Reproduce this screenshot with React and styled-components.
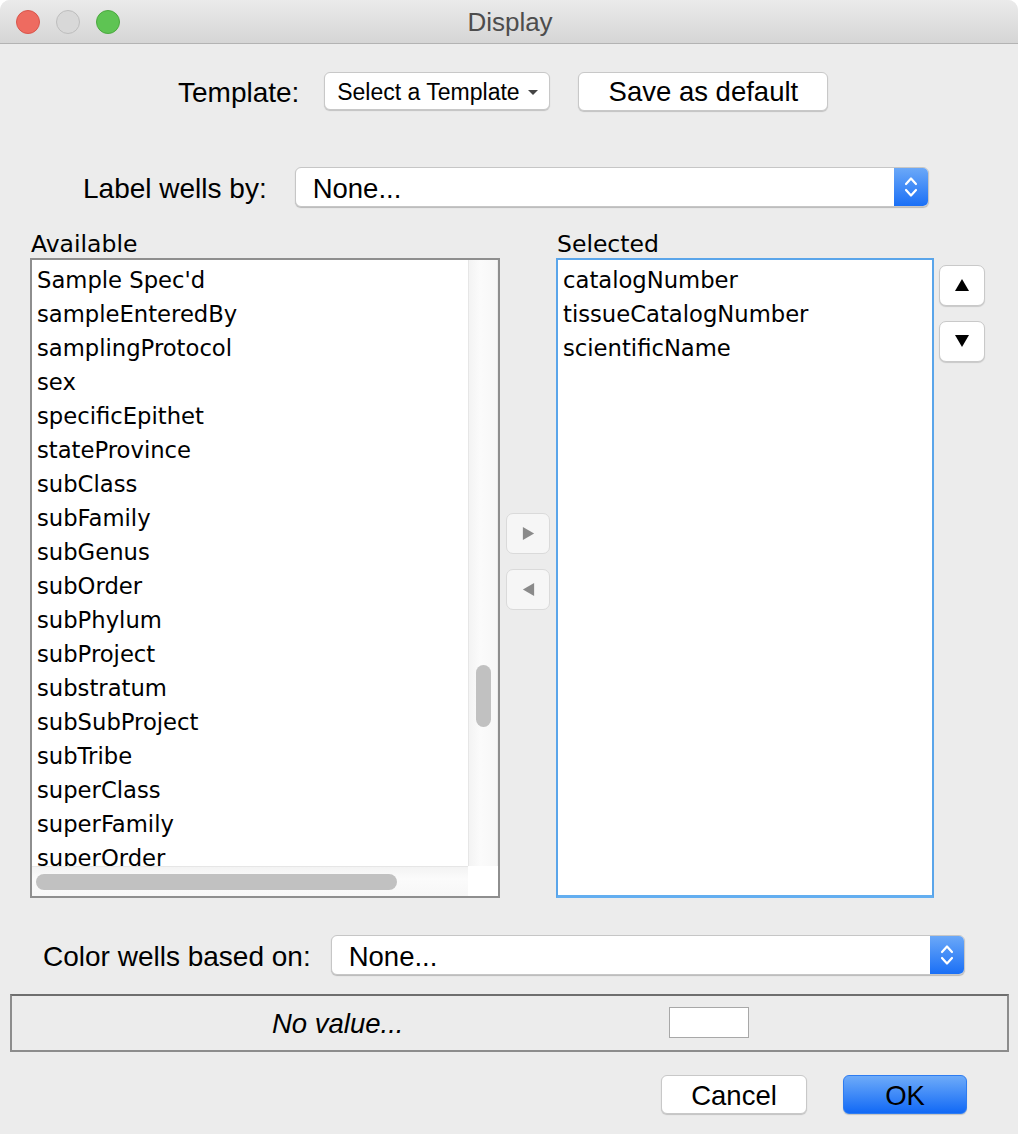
import React from "react";
import styled, { createGlobalStyle } from "styled-components";

const Global = createGlobalStyle`
  html, body { margin: 0; padding: 0; background: #ffffff; }
  body { font-family: "Liberation Sans", Arial, sans-serif; }
  * { box-sizing: border-box; }
`;

const Window = styled.div`
  width: 1018px;
  height: 1134px;
  background: #ececec;
  border-radius: 10px 10px 0 0;
  overflow: hidden;
  display: flex;
  flex-direction: column;
  color: #000;
`;

const TitleBar = styled.div`
  height: 44px;
  flex: none;
  background: linear-gradient(#ebebeb, #d5d5d5);
  border-bottom: 1px solid #b3b3b3;
  display: flex;
  align-items: center;
  position: relative;
`;

const Lights = styled.div`
  display: flex;
  gap: 16px;
  padding-left: 16px;
`;

const Light = styled.span`
  width: 24px;
  height: 24px;
  border-radius: 50%;
  background: ${(p) => p.$bg};
  border: 1px solid ${(p) => p.$bd};
`;

const Title = styled.div`
  position: absolute;
  left: 0;
  right: 0;
  top: 0;
  bottom: 0;
  display: flex;
  align-items: center;
  justify-content: center;
  font-size: 26px;
  color: #4d4d4d;
  padding: 2px 0 0 2px;
  pointer-events: none;
`;

const Row = styled.div`
  display: flex;
  align-items: center;
  padding-left: ${(p) => p.$pl || 0}px;
  margin-top: ${(p) => p.$mt || 0}px;
  height: ${(p) => p.$h || 40}px;
  flex: none;
`;

const Label = styled.span`
  font-size: 28px;
  padding-top: 4px;
  margin-right: ${(p) => p.$mr || 0}px;
  white-space: nowrap;
`;

const PushButton = styled.button`
  font-family: "Liberation Sans", Arial, sans-serif;
  font-size: ${(p) => p.$fs || 27.5}px;
  width: ${(p) => p.$w}px;
  height: ${(p) => p.$h || 39}px;
  background: #ffffff;
  border: 1px solid #c8c8c8;
  border-radius: 6px;
  box-shadow: 0 1px 1px rgba(0, 0, 0, 0.18);
  color: #000;
  padding: 2px 0 0 0;
  display: flex;
  align-items: center;
  justify-content: center;
  gap: 8px;
  margin-left: ${(p) => p.$ml || 0}px;
`;

const DefaultButton = styled(PushButton)`
  background: linear-gradient(#6eabf9, #1169f6);
  border: 1px solid #2e7cf1;
`;

const Caret = styled.span`
  width: 0;
  height: 0;
  border-left: 5px solid transparent;
  border-right: 5px solid transparent;
  border-top: 5px solid #444;
  margin-top: 0;
`;

const Combo = styled.div`
  width: 634px;
  height: 40px;
  background: #fff;
  border: 1px solid #c6c6c6;
  border-radius: 6px;
  box-shadow: 0 1px 1px rgba(0, 0, 0, 0.22);
  display: flex;
  align-items: stretch;
  overflow: hidden;
`;

const ComboText = styled.div`
  flex: 1;
  display: flex;
  align-items: center;
  padding: 4px 0 0 17px;
  font-size: 27.5px;
`;

const Stepper = styled.div`
  width: 34px;
  background: linear-gradient(#6ba8f8, #1a6ff6);
  display: flex;
  align-items: center;
  justify-content: center;
`;

const ListsArea = styled.div`
  display: flex;
  padding-left: 30px;
  margin-top: 23px;
  flex: none;
`;

const Column = styled.div`
  display: flex;
  flex-direction: column;
  width: ${(p) => p.$w}px;
`;

const ListHeader = styled.div`
  font-family: "DejaVu Sans", Verdana, sans-serif;
  font-size: 23.5px;
  height: 28px;
  line-height: 28px;
  padding-left: 1px;
`;

const ListBox = styled.div`
  height: 640px;
  background: #fff;
  border: 2px solid ${(p) => (p.$focus ? "#5aa5ea" : "#8e8e8e")};
  ${(p) => p.$focus && "border-bottom-width: 3px; border-bottom-color: #63aef0;"}
  display: grid;
  grid-template-columns: ${(p) => (p.$scroll ? "1fr 30px" : "1fr")};
  grid-template-rows: ${(p) => (p.$scroll ? "1fr 30px" : "1fr")};
  overflow: hidden;
`;

const Viewport = styled.div`
  overflow: hidden;
  padding-top: 3px;
`;

const Item = styled.div`
  font-family: "DejaVu Sans", Verdana, sans-serif;
  font-size: 22.7px;
  height: 34px;
  line-height: 34px;
  padding-left: 5px;
  white-space: nowrap;
`;

const VTrack = styled.div`
  background: linear-gradient(90deg, #f3f3f3, #fbfbfb 40%, #f7f7f7);
  border-left: 1px solid #e6e6e6;
  border-right: 1px solid #ececec;
  padding-top: 405px;
  display: flex;
  justify-content: center;
`;

const VThumb = styled.div`
  width: 15px;
  height: 62px;
  border-radius: 8px;
  background: #c1c1c1;
`;

const HTrack = styled.div`
  background: linear-gradient(#f3f3f3, #fbfbfb 40%, #f7f7f7);
  border-top: 1px solid #e6e6e6;
  padding: 7px 0 0 4px;
`;

const HThumb = styled.div`
  width: 361px;
  height: 16px;
  border-radius: 8px;
  background: #c1c1c1;
`;

const Corner = styled.div`
  background: #fff;
`;

const MoveColumn = styled.div`
  width: 56px;
  padding: 283px 6px 0 6px;
  display: flex;
  flex-direction: column;
  gap: 15px;
`;

const OrderColumn = styled.div`
  padding: 35px 0 0 5px;
  display: flex;
  flex-direction: column;
  gap: 15px;
`;

const ArrowButton = styled.button`
  width: ${(p) => p.$w}px;
  height: 41px;
  padding: 0;
  border-radius: 7px;
  background: ${(p) => (p.$disabled ? "#f6f6f6" : "#fff")};
  border: 1px solid ${(p) => (p.$disabled ? "#dadada" : "#c9c9c9")};
  box-shadow: ${(p) => (p.$disabled ? "none" : "0 1px 1px rgba(0,0,0,0.15)")};
  display: flex;
  align-items: center;
  justify-content: center;
`;

const Panel = styled.div`
  margin: 19px 9px 0 10px;
  height: 58px;
  border: 2px solid #8c8c8c;
  border-top-color: #6e6e6e;
  display: flex;
  align-items: center;
  padding-left: 260px;
  flex: none;
`;

const Italic = styled.span`
  font-size: 27.5px;
  font-style: italic;
  padding-top: 2px;
  width: 397px;
`;

const Swatch = styled.div`
  width: 80px;
  height: 31px;
  background: #fff;
  border: 1px solid #a8a8a8;
  margin-top: -1px;
`;

const Footer = styled.div`
  display: flex;
  justify-content: flex-end;
  padding-right: 51px;
  margin-top: 23px;
  gap: 36px;
`;

const available = [
  "Sample Spec'd",
  "sampleEnteredBy",
  "samplingProtocol",
  "sex",
  "specificEpithet",
  "stateProvince",
  "subClass",
  "subFamily",
  "subGenus",
  "subOrder",
  "subPhylum",
  "subProject",
  "substratum",
  "subSubProject",
  "subTribe",
  "superClass",
  "superFamily",
  "superOrder",
];

const selected = ["catalogNumber", "tissueCatalogNumber", "scientificName"];

const Tri = ({ dir, color, size = 14 }) => {
  const pts = {
    up: "1,13 8,1 15,13",
    down: "1,1 15,1 8,13",
    right: "2,1 14,8 2,15",
    left: "14,1 2,8 14,15",
  }[dir];
  return (
    <svg width={size} height={size} viewBox="0 0 16 16">
      <polygon points={pts} fill={color} />
    </svg>
  );
};

const Chevrons = () => (
  <svg width="16" height="26" viewBox="0 0 16 26">
    <path d="M3 10 L8 4.5 L13 10" stroke="#fff" strokeWidth="2.2" fill="none" strokeLinecap="round" strokeLinejoin="round" />
    <path d="M3 16 L8 21.5 L13 16" stroke="#fff" strokeWidth="2.2" fill="none" strokeLinecap="round" strokeLinejoin="round" />
  </svg>
);

export default function App() {
  return (
    <>
      <Global />
      <Window>
        <TitleBar>
          <Lights>
            <Light $bg="#ee6b60" $bd="#d8554b" />
            <Light $bg="#d8d8d8" $bd="#bdbdbd" />
            <Light $bg="#5ec453" $bd="#4ba83f" />
          </Lights>
          <Title>Display</Title>
        </TitleBar>

        <Row $pl={178} $mt={27} $h={40}>
          <Label $mr={25}>Template:</Label>
          <PushButton $w={226} $h={38} $fs={23}>
            Select a Template <Caret />
          </PushButton>
          <PushButton $w={250} $h={39} $ml={28}>
            Save as default
          </PushButton>
        </Row>

        <Row $pl={83} $mt={56} $h={40}>
          <Label $mr={28}>Label wells by:</Label>
          <Combo>
            <ComboText>None...</ComboText>
            <Stepper>
              <Chevrons />
            </Stepper>
          </Combo>
        </Row>

        <ListsArea>
          <Column $w={470}>
            <ListHeader>Available</ListHeader>
            <ListBox $scroll>
              <Viewport>
                {available.map((t) => (
                  <Item key={t}>{t}</Item>
                ))}
              </Viewport>
              <VTrack>
                <VThumb />
              </VTrack>
              <HTrack>
                <HThumb />
              </HTrack>
              <Corner />
            </ListBox>
          </Column>
          <MoveColumn>
            <ArrowButton $w={44} $disabled>
              <Tri dir="right" color="#8a8a8a" size={15} />
            </ArrowButton>
            <ArrowButton $w={44} $disabled>
              <Tri dir="left" color="#8a8a8a" size={15} />
            </ArrowButton>
          </MoveColumn>
          <Column $w={378}>
            <ListHeader>Selected</ListHeader>
            <ListBox $focus>
              <Viewport>
                {selected.map((t) => (
                  <Item key={t}>{t}</Item>
                ))}
              </Viewport>
            </ListBox>
          </Column>
          <OrderColumn>
            <ArrowButton $w={46}>
              <Tri dir="up" color="#000" size={16} />
            </ArrowButton>
            <ArrowButton $w={46}>
              <Tri dir="down" color="#000" size={16} />
            </ArrowButton>
          </OrderColumn>
        </ListsArea>

        <Row $pl={43} $mt={37} $h={40}>
          <Label $mr={20}>Color wells based on:</Label>
          <Combo>
            <ComboText>None...</ComboText>
            <Stepper>
              <Chevrons />
            </Stepper>
          </Combo>
        </Row>

        <Panel>
          <Italic>No value...</Italic>
          <Swatch />
        </Panel>

        <Footer>
          <PushButton $w={146}>Cancel</PushButton>
          <DefaultButton $w={124}>OK</DefaultButton>
        </Footer>
      </Window>
    </>
  );
}
